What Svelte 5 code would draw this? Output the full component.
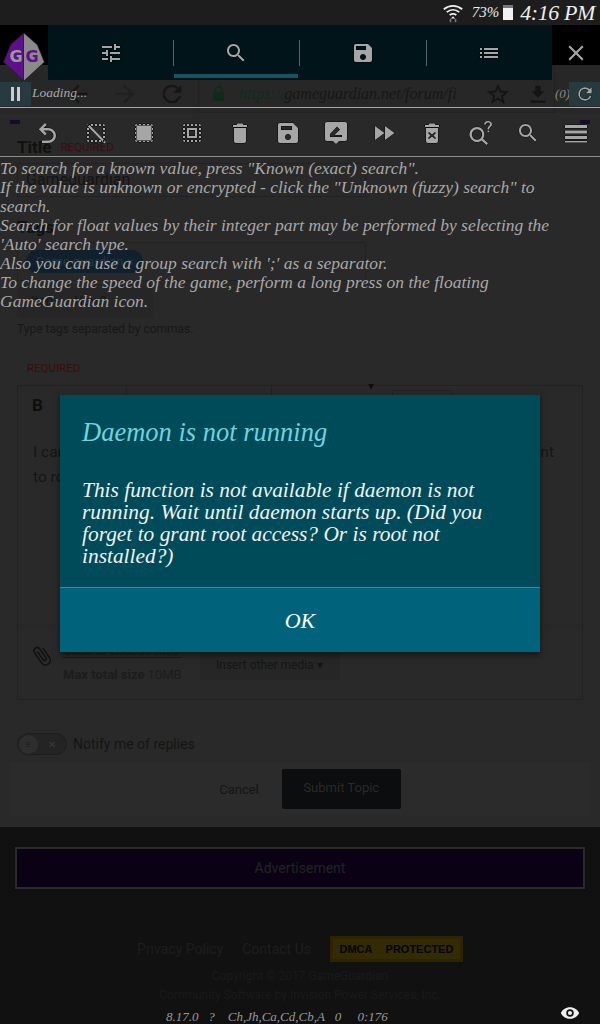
<script>
	const tabs = [
		{ d: "M3 17v2h6v-2H3zM3 5v2h10V5H3zm10 16v-2h8v-2h-8v-2h-2v6h2zM7 9v2H3v2h4v2h2V9H7zm14 4v-2H11v2h10zm-6-4h2V7h4V5h-4V3h-2v6z" },
		{ d: "M15.5 14h-.79l-.28-.27C15.41 12.59 16 11.11 16 9.5 16 5.91 13.09 3 9.5 3S3 5.91 3 9.5 5.91 16 9.5 16c1.61 0 3.09-.59 4.23-1.57l.27.28v.79l5 4.99L20.49 19l-4.99-5zm-6 0C7.01 14 5 11.99 5 9.5S7.01 5 9.5 5 14 7.01 14 9.5 11.99 14 9.5 14z", active: true },
		{ d: "M17 3H5c-1.11 0-2 .9-2 2v14c0 1.1.89 2 2 2h14c1.1 0 2-.9 2-2V7l-4-4zm-5 16c-1.66 0-3-1.34-3-3s1.34-3 3-3 3 1.34 3 3-1.34 3-3 3zm3-10H5V5h10v4z" },
		{ d: "M3 13h2v-2H3v2zm0 4h2v-2H3v2zm0-8h2V7H3v2zm4 4h14v-2H7v2zm0 4h14v-2H7v2zM7 7v2h14V7H7z" }
	];
	const dots = "M3 5h2V3c-1.1 0-2 .9-2 2zm0 8h2v-2H3v2zm4 8h2v-2H7v2zM3 9h2V7H3v2zm10-6h-2v2h2V3zm6 0v2h2c0-1.1-.9-2-2-2zM5 21v-2H3c0 1.1.9 2 2 2zm-2-4h2v-2H3v2zM9 3H7v2h2V3zm2 18h2v-2h-2v2zm8-8h2v-2h-2v2zm0 8c1.1 0 2-.9 2-2h-2v2zm0-12h2V7h-2v2zm0 8h2v-2h-2v2zm-4 4h2v-2h-2v2zm0-16h2V3h-2v2z";
	const tools = [
		"M12 7H7.5l3.2-3.2L9 2 2.8 8.2 9 14.4l1.7-1.8L7.500 9.500H12c3 0 5.500 2.200 5.500 5S15 19.500 12 19.500H6V22h6c4.400 0 8-3.300 8-7.500S16.400 7 12 7z",
		dots + "M4 2.500l18 18.500-1.600 1.500L2.500 4z",
		dots + "M4.500 4.500h15v15h-15z",
		dots + "M7 17h10V7H7v10zm2-8h6v6H9V9z",
		"M6 20c0 1.100.9 2 2 2h8c1.100 0 2-.9 2-2V7H6v13zM19 4h-3.500l-1-1.500h-5L8.500 4H5v2h14V4z",
		"M17 2H4c-1.100 0-2 .9-2 2v16c0 1.100.9 2 2 2h16c1.100 0 2-.9 2-2V7l-5-5zm-5 17c-1.700 0-3-1.300-3-3s1.300-3 3-3 3 1.300 3 3-1.300 3-3 3zm4-10H5V5h11v4z",
		"M3 1h18c1.100 0 2 .9 2 2v15c0 1.100-.9 2-2 2h-6l-3 3-3-3H3c-1.100 0-2-.9-2-2V3c0-1.100.9-2 2-2zm3 13v2h12v-2h-7.500l5.500-5.500L13 5.500 6 13z",
		"M3 19l9.500-7L3 5v14zm10-14v14l9.500-7L13 5z",
		"M6 20c0 1.100.9 2 2 2h8c1.100 0 2-.9 2-2V7H6v13zm3-9l3 2.500 3-2.500 1 1-2.500 2.500L16 17l-1 1-3-2.500L9 18l-1-1 2.500-2.500L8 12zM15.500 4l-1-1.500h-5L8.500 4H5v2h14V4z",
		"M9 6a7.500 7.500 0 1 0 4.500 13.500l5 4.500 1.500-1.700-5-4.600A7.500 7.500 0 0 0 9 6zm0 2.300a5.200 5.200 0 1 1 0 10.400 5.200 5.200 0 0 1 0-10.400zM16 3.600C16 1.600 17.600 0 20 0s4 1.500 4 3.300c0 2.500-2.800 2.700-2.800 5.200h-1.700c0-3.300 2.600-3.400 2.600-5.200 0-1-.9-1.700-2.100-1.700s-2.100.8-2.100 2zM19.400 9.500h1.800v1.800h-1.800z",
		"M15.500 14h-.79l-.28-.27C15.410 12.590 16 11.110 16 9.500 16 5.910 13.090 3 9.500 3S3 5.910 3 9.500 5.910 16 9.500 16c1.610 0 3.090-.59 4.230-1.570l.27.28v.79l5 4.990L20.490 19l-4.990-5zm-6 0C7.010 14 5 11.990 5 9.500S7.010 5 9.500 5 14 7.010 14 9.500 11.990 14 9.500 14z",
		"M1 4h22v3H1zM1 9.500h22v3H1zM1 15h22v3H1zM1 20h22v1.500H1z"
	];
</script>

<div class="screen">
	<!-- the dimmed forum page -->
	<div class="page">
		<div class="status">
			<svg class="wifi" viewBox="0 0 24 24" width="20" height="22"><path d="M1 7.500C7.500 2 16.500 2 23 7.500M4.500 11c4.500-3.700 10.500-3.700 15 0M8 14.500c2.500-1.800 5.500-1.800 8 0" fill="none" stroke="#eee" stroke-width="2.200"/><path d="M12 16l-2.500 2.500h5z" fill="#eee"/><path d="M9 19v4M15 19v4" stroke="#777" stroke-width="2"/></svg>
			<span class="pct">73%</span>
			<span class="battery"></span>
			<span class="clock">4:16 PM</span>
		</div>
		<div class="site-head"></div>
		<div class="browser">
			<svg class="nav" viewBox="0 0 24 24" width="28" height="28"><path d="M20 11H7.800l5.600-5.600L12 4l-8 8 8 8 1.400-1.400L7.800 13H20z" fill="#161616"/></svg>
			<svg class="nav" viewBox="0 0 24 24" width="28" height="28"><path d="M4 11h12.200l-5.600-5.600L12 4l8 8-8 8-1.400-1.400 5.600-5.600H4z" fill="#202020"/></svg>
			<svg class="nav" viewBox="0 0 24 24" width="28" height="28"><path d="M17.650 6.350A7.960 7.960 0 0 0 12 4a8 8 0 1 0 7.730 10h-2.080A6 6 0 1 1 12 6c1.660 0 3.140.69 4.220 1.780L13 11h7V4l-2.350 2.350z" fill="#161616"/></svg>
			<div class="url">
				<svg class="lock" viewBox="0 0 12 15" width="13" height="15"><path d="M2 6V4a4 4 0 0 1 8 0v2h1.500v9H.5V6zm1.500 0h5V4a2.500 2.500 0 0 0-5 0z" fill="#0e2c1c"/></svg>
				<span class="addr"><span class="https">https://</span>gameguardian.net/forum/fi</span>
				<svg class="star" viewBox="0 0 24 24" width="22" height="22"><path d="M12 3l2.700 6.300 6.800.6-5.200 4.500 1.600 6.700L12 17l-5.900 3.600 1.600-6.700L2.500 9.900l6.800-.6z" fill="none" stroke="#141414" stroke-width="2"/></svg>
				<svg class="dl" viewBox="0 0 24 24" width="22" height="22"><path d="M19 9h-4V3H9v6H5l7 7zM4 19v2.500h16V19z" fill="#141414"/></svg>
				<span class="zero">(0)</span>
			</div>
		</div>
		<form class="form" onsubmit={(e) => e.preventDefault()}>
			<div class="marks"><i></i><i></i></div>
			<div class="label"><b>Title</b><span class="req">REQUIRED</span></div>
			<div class="input">Gameguardian</div>
			<div class="label tags-label"><b>Tags</b></div>
			<div class="input tags"><span class="pill">Game guardian ×</span></div>
			<div class="pick">Item ... Now?</div>
			<div class="hint">Type tags separated by commas.</div>
			<div class="req req-two">REQUIRED</div>
			<div class="editor">
				<div class="ed-tools">
					<b>B</b>
					<span class="ed-sep first"></span>
					<span class="ed-sep second"></span>
					<span class="ed-caret">▾</span>
					<span class="ed-box"></span>
				</div>
				<div class="ed-text">
					<p><span>I can't find the game</span><span>nt</span></p>
					<p>to root</p>
				</div>
				<div class="ed-files">
					<svg class="clip" viewBox="0 0 24 24" width="24" height="24"><path d="M16.500 6v11.500a4 4 0 0 1-8 0V5a2.500 2.500 0 0 1 5 0v10.500a1 1 0 0 1-2 0V6H10v9.500a2.500 2.500 0 0 0 5 0V5a4 4 0 0 0-8 0v12.500a5.500 5.500 0 0 0 11 0V6z" fill="#111" transform="rotate(-35 12 12)"/></svg>
					<div class="files-info">
						<span class="choose">Click to choose files</span>
						<span><b>Max total size</b> 10MB</span>
					</div>
					<div class="media">Insert other media ▾</div>
				</div>
			</div>
			<div class="notify">
				<span class="toggle"><span class="knob">≡</span><span class="off">✕</span></span>
				Notify me of replies
			</div>
			<div class="actions">
				<span class="cancel">Cancel</span>
				<span class="submit">Submit Topic</span>
			</div>
		</form>
		<footer class="foot">
			<div class="ad">Advertisement</div>
			<div class="links">
				<span>Privacy Policy</span>
				<span>Contact Us</span>
				<span class="dmca"><b>DMCA</b><b>PROTECTED</b></span>
			</div>
			<div class="copy">Copyright © 2017 GameGuardian</div>
			<div class="copy">Community Software by Invision Power Services, Inc.</div>
		</footer>
	</div>

	<!-- GameGuardian overlay -->
	<div class="gg">
		<div class="gg-top">
			<svg class="logo" viewBox="0 0 42 48" width="42" height="48">
				<path d="M21 0.500L8 12 1 29l20 18.500z" />
				<path d="M21 0.500L34 12l7 17-20 18.500z" />
				<text x="13" y="29" class="logo-g left">G</text>
				<text x="29" y="29" class="logo-g right">G</text>
			</svg>
			<div class="tabs">
				{#each tabs as tab, i}
					<div class="tab" class:active={tab.active} class:sep={i > 0}>
						<svg viewBox="0 0 24 24" width="24" height="24"><path d={tab.d} /></svg>
					</div>
				{/each}
			</div>
			<svg class="close" viewBox="0 0 24 24" width="26" height="26"><path d="M19 6.410L17.590 5 12 10.590 6.410 5 5 6.410 10.590 12 5 17.590 6.410 19 12 13.410 17.590 19 19 17.590 13.410 12 19 6.410z" /></svg>
		</div>
		<div class="gg-state">
			<span class="square pause"><i></i><i></i></span>
			<span class="loading">Loading...</span>
			<span class="square refresh">
				<svg viewBox="0 0 24 24" width="20" height="20"><path d="M17.650 6.350A7.960 7.960 0 0 0 12 4a8 8 0 1 0 7.730 10h-2.080A6 6 0 1 1 12 6c1.660 0 3.140.69 4.220 1.780L13 11h7V4l-2.350 2.350z" /></svg>
			</span>
		</div>
		<div class="toolbar">
			{#each tools as d}
				<div class="tool"><svg viewBox="0 0 24 24" width="24" height="24"><path {d} /></svg></div>
			{/each}
		</div>
		<div class="help">
			To search for a known value, press "Known (exact) search".<br />
			If the value is unknown or encrypted - click the "Unknown (fuzzy) search" to search.<br />
			Search for float values by their integer part may be performed by selecting the 'Auto' search type.<br />
			Also you can use a group search with ';' as a separator.<br />
			To change the speed of the game, perform a long press on the floating GameGuardian icon.
		</div>
		<div class="dialog">
			<div class="dlg-body">
				<h2>Daemon is not running</h2>
				<p>This function is not available if daemon is not running. Wait until daemon starts up. (Did you forget to grant root access? Or is root not installed?)</p>
			</div>
			<button type="button" class="ok">OK</button>
		</div>
		<div class="debug">
			<span class="debug-text">8.17.0&nbsp;&nbsp; ?&nbsp;&nbsp;&nbsp; Ch,Jh,Ca,Cd,Cb,A&nbsp;&nbsp; 0&nbsp;&nbsp;&nbsp;&nbsp; 0:176</span>
			<svg class="eye" viewBox="0 0 24 24" width="20" height="20"><path d="M12 5C7 5 2.700 8.100 1 12c1.700 3.900 6 7 11 7s9.300-3.100 11-7c-1.700-3.900-6-7-11-7zm0 11.500a4.500 4.500 0 1 1 0-9 4.500 4.500 0 0 1 0 9zm0-7a2.500 2.500 0 1 0 0 5 2.500 2.500 0 0 0 0-5z"/></svg>
		</div>
	</div>
</div>

<style>
	:global(body) {
		margin: 0;
		background: #292929;
	}

	.screen {
		position: relative;
		width: 600px;
		height: 1024px;
		overflow: hidden;
		background: #292929;
		font-family: Roboto, "Liberation Sans", sans-serif;
		color: #151515;
	}

	/* page */
	.status {
		height: 25px;
		background: #1d1d1d;
		display: flex;
		align-items: center;
		justify-content: flex-end;
		padding-right: 5px;
		color: #eee;
		font-family: "Liberation Serif", serif;
		font-style: italic;
	}
	.wifi {
		margin-right: 9px;
	}
	.pct {
		font-size: 15px;
	}
	.battery {
		width: 10px;
		height: 15px;
		margin: 0 7px 0 4px;
		background: linear-gradient(#777 3px, #f2f2f2 3px);
	}
	.clock {
		font-size: 22px;
		letter-spacing: -0.4px;
	}
	.site-head {
		height: 40px;
		background: #000;
	}
	.browser {
		height: 48px;
		position: relative;
		background: #272727;
		box-sizing: border-box;
		display: flex;
		align-items: flex-start;
		padding: 15px 0 0 64px;
		gap: 19px;
	}
	.url {
		position: absolute;
		left: 198px;
		top: 0;
		width: 357px;
		height: 48px;
		box-sizing: border-box;
		border: 1px solid #222;
		border-top: 0;
		display: flex;
		align-items: center;
		padding: 10px 0 0 13px;
	}
	.lock {
		flex: none;
		margin-right: 14px;
	}
	.addr {
		flex: none;
		width: 239px;
		white-space: nowrap;
		font: italic 16px "Liberation Serif", serif;
		color: #161616;
	}
	.https {
		color: #0e2c1c;
	}
	.star {
		margin-left: 9px;
		flex: none;
	}
	.dl {
		margin-left: 18px;
		flex: none;
	}
	.zero {
		margin-left: 6px;
		font: italic 13px "Liberation Serif", serif;
		color: #888;
	}
	.form {
		height: 714px;
		box-sizing: border-box;
		padding: 7px 17px 0;
		display: flex;
		flex-direction: column;
		font-size: 14px;
	}
	.marks {
		height: 4px;
		margin: 0 -7px 6px;
		display: flex;
		justify-content: space-between;
	}
	.marks i {
		width: 10px;
		background: #180a28;
	}
	.label {
		height: 33px;
		display: flex;
		align-items: center;
		gap: 9px;
		font-size: 17px;
		color: #111;
	}
	.req {
		font-size: 11.5px;
		color: #3a0e0e;
	}
	.input {
		width: 349px;
		height: 34px;
		box-sizing: border-box;
		border: 1px solid #222;
		padding: 6px 8px;
		font-size: 16px;
	}
	.tags-label {
		margin-top: 14px;
		height: 31px;
	}
	.tags {
		height: 39px;
		padding: 7px 8px;
	}
	.pill {
		display: inline-block;
		width: 117px;
		height: 23px;
		line-height: 23px;
		text-align: center;
		border-radius: 12px;
		background: #10202d;
		font-size: 13px;
		color: #263540;
	}
	.pick {
		width: 136px;
		height: 33px;
		margin-top: 3px;
		background: #262626;
		font-size: 13px;
		line-height: 33px;
		padding-left: 14px;
		box-sizing: border-box;
	}
	.hint {
		margin-top: 3px;
		height: 18px;
		font-size: 12px;
		line-height: 18px;
		color: #171717;
	}
	.req-two {
		margin: 24px 0 10px 10px;
		height: 13px;
		line-height: 13px;
	}
	.editor {
		width: 566px;
		height: 315px;
		box-sizing: border-box;
		border: 1px solid #222;
		display: flex;
		flex-direction: column;
	}
	.ed-tools {
		position: relative;
		height: 40px;
		padding: 9px 14px;
		box-sizing: border-box;
		font-size: 17px;
		color: #0e0e0e;
	}
	.ed-sep {
		position: absolute;
		top: 0;
		width: 1px;
		height: 20px;
		background: #222;
	}
	.ed-sep.first {
		left: 108px;
	}
	.ed-sep.second {
		left: 253px;
	}
	.ed-caret {
		position: absolute;
		left: 350px;
		top: -7px;
		font-size: 12px;
	}
	.ed-box {
		position: absolute;
		left: 374px;
		top: 4px;
		width: 60px;
		height: 18px;
		box-sizing: border-box;
		border: 1px solid #222;
		border-radius: 2px;
	}
	.ed-text {
		height: 199px;
		padding: 14px 28px 14px 15px;
		box-sizing: border-box;
		font-size: 15.5px;
	}
	.ed-text p {
		margin: 0;
		line-height: 25px;
		display: flex;
		justify-content: space-between;
	}
	.ed-files {
		display: flex;
		align-items: flex-start;
		padding: 18px 12px 0;
		gap: 9px;
		border-top: 1px solid #262626;
	}
	.files-info {
		width: 130px;
		display: flex;
		flex-direction: column;
		gap: 9px;
		font-size: 13px;
		color: #1c1c1c;
	}
	.choose {
		border-bottom: 1px solid #2b0a3d;
		line-height: 13px;
		width: 119px;
	}
	.media {
		width: 140px;
		height: 30px;
		margin: 6px 0 0 -2px;
		line-height: 30px;
		box-sizing: border-box;
		padding-left: 16px;
		background: #262626;
		font-size: 12px;
	}
	.notify {
		margin-top: 33px;
		height: 22px;
		display: flex;
		align-items: center;
		gap: 6px;
		font-size: 14px;
	}
	.toggle {
		width: 50px;
		height: 22px;
		box-sizing: border-box;
		border: 1px solid #1e1e1e;
		border-radius: 11px;
		background: #242424;
		display: flex;
		align-items: center;
		justify-content: space-between;
		padding: 0 10px 0 1px;
		font-size: 10px;
		color: #3c3c3c;
	}
	.knob {
		width: 19px;
		height: 19px;
		line-height: 19px;
		text-align: center;
		border-radius: 50%;
		background: #2e2e2e;
		color: #1e1e1e;
	}
	.actions {
		margin: 7px -7px 0;
		height: 54px;
		background: #2b2b2b;
		display: flex;
		align-items: center;
		justify-content: center;
		gap: 23px;
		font-size: 13px;
		padding-left: 20px;
	}
	.submit {
		width: 119px;
		height: 40px;
		line-height: 38px;
		text-align: center;
		background: #0b0d0e;
		border-radius: 2px;
		color: #2a2a2a;
	}
	.foot {
		height: 197px;
		background: #111;
		box-sizing: border-box;
		padding: 20px 15px 0;
		text-align: center;
	}
	.ad {
		height: 42px;
		line-height: 38px;
		box-sizing: border-box;
		border: 2px solid #2a2a2a;
		background: #0a0214;
		font-size: 14px;
		color: #232323;
	}
	.links {
		margin-top: 47px;
		display: flex;
		justify-content: center;
		align-items: center;
		gap: 19px;
		font-size: 14px;
		color: #1e1e1e;
	}
	.dmca {
		display: flex;
		height: 26px;
		width: 133px;
		box-sizing: border-box;
		border: 3px solid #2e2500;
		background: #332a06;
		color: #050505;
		font: bold 11px "Liberation Sans", sans-serif;
		line-height: 20px;
		justify-content: space-around;
	}
	.copy {
		margin-top: 3px;
		line-height: 16px;
		font-size: 12px;
		color: #1a1a1a;
	}
	.links + .copy {
		margin-top: 6px;
	}

	/* overlay */
	.gg {
		position: absolute;
		inset: 0;
		display: flex;
		flex-direction: column;
		font-family: "Liberation Serif", serif;
		font-style: italic;
	}
	.gg svg path {
		fill: #a6a6a6;
		stroke: #000;
		stroke-width: 0.8;
		paint-order: stroke;
	}
	.gg svg.logo path:first-child {
		fill: #5e0f8c;
		stroke: #222;
		stroke-width: 1.5;
	}
	.gg svg.logo path:nth-child(2) {
		fill: #8a8a8a;
		stroke: #222;
		stroke-width: 1.5;
	}
	.gg svg.eye path {
		fill: #eee;
		stroke: none;
	}
	.gg-top {
		margin-top: 25px;
		height: 55px;
		display: flex;
		align-items: center;
		position: relative;
	}
	.logo {
		position: absolute;
		left: 3px;
		top: 8px;
		z-index: 1;
	}
	.logo-g {
		font: bold 16px "DejaVu Sans", sans-serif;
		text-anchor: middle;
	}
	.logo-g.left {
		fill: #999;
	}
	.logo-g.right {
		fill: #5e0f8c;
	}
	.tabs {
		margin-left: 48px;
		width: 504px;
		height: 55px;
		background: #00141a;
		display: grid;
		grid-template-columns: 125px 126px 127px 126px;
	}
	.tab {
		position: relative;
		display: flex;
		align-items: center;
		justify-content: center;
	}
	.tab.sep::before {
		content: "";
		position: absolute;
		left: 0;
		top: 15px;
		height: 26px;
		width: 1px;
		background: #5a6467;
	}
	.tab.active::after {
		content: "";
		position: absolute;
		left: 1px;
		right: 1px;
		bottom: 2px;
		height: 4px;
		background: #1c5063;
	}
	.close {
		margin-left: 11px;
	}
	.gg-state {
		margin-top: 2px;
		height: 25px;
		border-bottom: 1px solid #a8a8a8;
		display: flex;
		align-items: flex-start;
		justify-content: space-between;
		position: relative;
	}
	.square {
		width: 31px;
		height: 24px;
		background: #263a40;
		display: flex;
		align-items: center;
		justify-content: center;
	}
	.pause {
		gap: 3px;
	}
	.pause i {
		width: 3px;
		height: 14px;
		background: #ccc;
	}
	.loading {
		position: absolute;
		left: 32px;
		top: 3px;
		font-size: 13.5px;
		color: #aaa;
	}
	.toolbar {
		height: 49px;
		box-sizing: border-box;
		padding-left: 24px;
		border-bottom: 1px solid #8e8e8e;
		display: flex;
		align-items: flex-start;
	}
	.tool {
		width: 48px;
		height: 46px;
		padding-top: 13px;
		box-sizing: border-box;
		display: flex;
		justify-content: center;
	}
	.help {
		box-sizing: border-box;
		font-size: 17.5px;
		line-height: 19px;
		color: #a8a8a8;
		padding: 2px 36px 0 0;
		height: 137px;
	}
	.dialog {
		margin: 101px auto 0;
		width: 480px;
		height: 258px;
		background: #004b5a;
		box-shadow: 0 3px 6px rgba(0, 0, 0, 0.5);
		display: flex;
		flex-direction: column;
	}
	.dlg-body {
		height: 193px;
		box-sizing: border-box;
		padding: 22px 22px 0;
		border-bottom: 1px solid #3d8a9a;
	}
	h2 {
		margin: 0;
		font-size: 26.5px;
		line-height: 30px;
		font-weight: normal;
		color: #72d1dc;
	}
	.dlg-body p {
		margin: 32px 10px 0 0;
		font-size: 21.4px;
		line-height: 22px;
		color: #f2f2f2;
	}
	.ok {
		flex: 1;
		border: 0;
		background: #00637b;
		color: #fff;
		font: italic 22px "Liberation Serif", serif;
		padding: 2px 0 0;
	}
	.debug {
		margin-top: 350px;
		height: 22px;
		position: relative;
		font-size: 13px;
		color: #999;
		text-align: left;
		padding-left: 166px;
		line-height: 30px;
		white-space: pre;
	}
	.eye {
		position: absolute;
		left: 560px;
		top: 1px;
	}
</style>
